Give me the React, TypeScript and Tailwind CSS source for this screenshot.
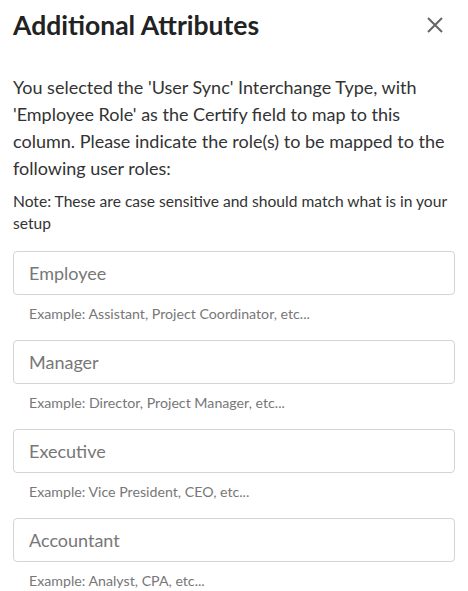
import React from 'react';

const roles = [
  { label: 'Employee', example: 'Example: Assistant, Project Coordinator, etc...' },
  { label: 'Manager', example: 'Example: Director, Project Manager, etc...' },
  { label: 'Executive', example: 'Example: Vice President, CEO, etc...' },
  { label: 'Accountant', example: 'Example: Analyst, CPA, etc...' },
];

const App: React.FC = () => {
  return (
    <div className="w-[468px] h-[591px] bg-white px-[13px] font-['Lato',sans-serif] overflow-hidden">
      {/* Header */}
      <div className="flex items-center justify-between h-[50px]">
        <h2 className="text-[26.5px] font-bold text-[#222] leading-none">Additional Attributes</h2>
        <button className="mr-[12px] text-[#666]">
          <svg width="16" height="16" viewBox="0 0 16 16" fill="none" stroke="currentColor" strokeWidth="2">
            <path d="M1 1L15 15M15 1L1 15" />
          </svg>
        </button>
      </div>

      {/* Description */}
      <p className="mt-[24px] text-[18px] leading-[27px] text-[#333]">
        You selected the 'User Sync' Interchange Type, with 'Employee Role' as the Certify field to map to this column. Please indicate the role(s) to be mapped to the following user roles:
      </p>
      <p className="mt-[8px] text-[15.6px] leading-[22px] text-[#333]">
        Note: These are case sensitive and should match what is in your setup
      </p>

      {/* Role inputs */}
      <div className="mt-[17px] flex flex-col gap-[16px]">
        {roles.map((role) => (
          <div key={role.label}>
            <input
              type="text"
              placeholder={role.label}
              className="w-full h-[44px] border border-[#d4d4d4] rounded-[4px] px-[15px] text-[18px] text-[#333] placeholder:text-[#777] outline-none"
            />
            <p className="mt-[9px] pl-[16px] text-[14.2px] leading-[20px] text-[#777]">{role.example}</p>
          </div>
        ))}
      </div>
    </div>
  );
};

export default App;
